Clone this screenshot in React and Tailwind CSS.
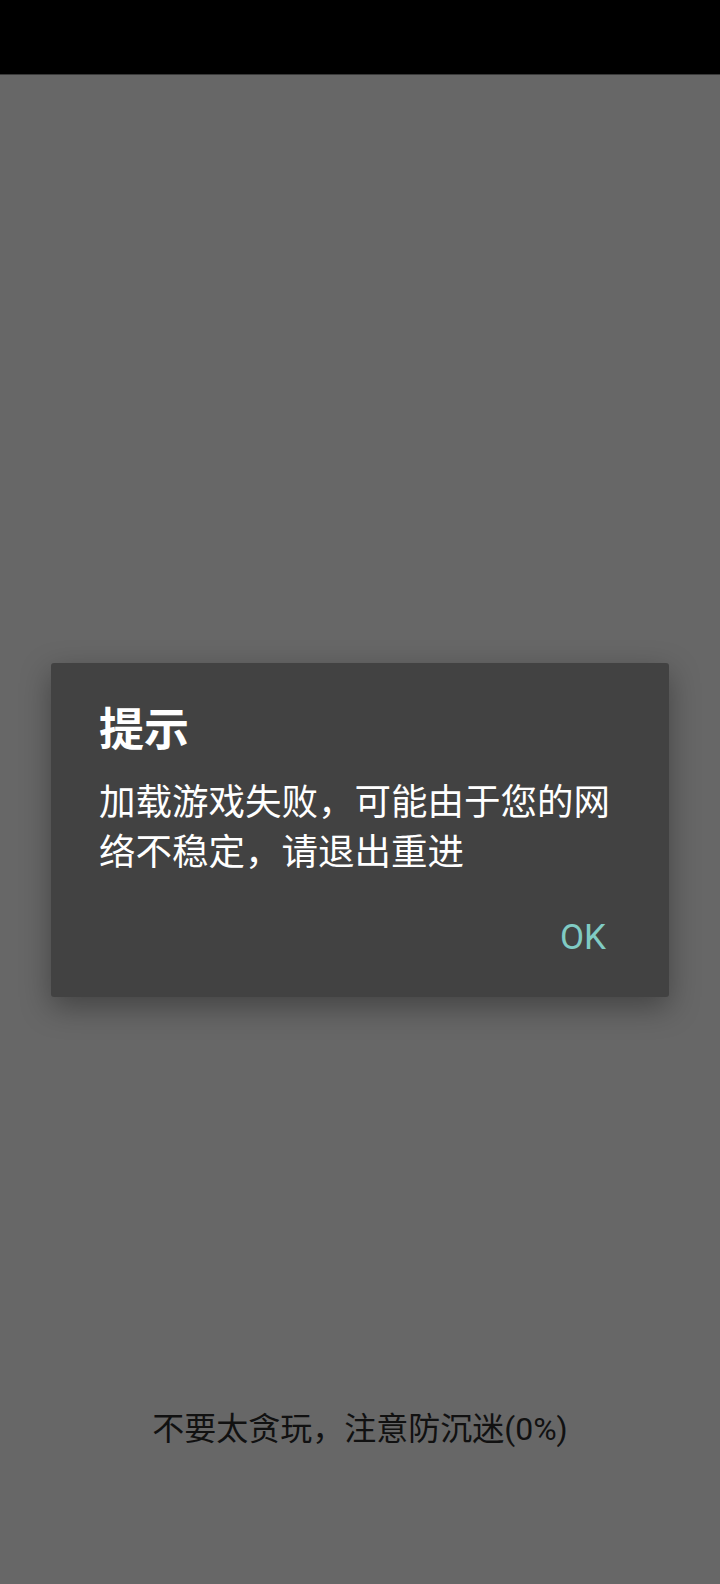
export default function App() {
  return (
    <div className="w-[720px] h-[1584px] flex flex-col bg-[#676767] font-['Roboto','Noto_Sans_CJK_SC',sans-serif]">
      <div className="h-[75px] shrink-0 bg-black border-b border-[#3a3a3a]" />

      <div className="relative flex-1 flex flex-col justify-end pb-[135px]">
        <p className="text-center text-[32px] leading-[40px] text-[#111]">不要太贪玩，注意防沉迷(0%)</p>

        {/* modal dialog */}
        <div className="absolute inset-0 flex items-center justify-center">
          <div className="w-[618px] rounded-[3px] bg-[#424242] pt-[42px] pb-[35px] shadow-[0_10px_30px_rgba(0,0,0,0.35)]">
            <h2 className="px-12 text-[45px] leading-[52px] font-bold text-white">提示</h2>
            <p className="mt-[21px] px-12 text-[36.5px] leading-[50px] text-white">
              加载游戏失败，可能由于您的网络不稳定，请退出重进
            </p>
            <div className="mt-[36px] flex justify-end pr-[63px]">
              <button className="text-[35px] leading-[48px] font-normal text-[#80cbc4]">OK</button>
            </div>
          </div>
        </div>
      </div>
    </div>
  );
}
